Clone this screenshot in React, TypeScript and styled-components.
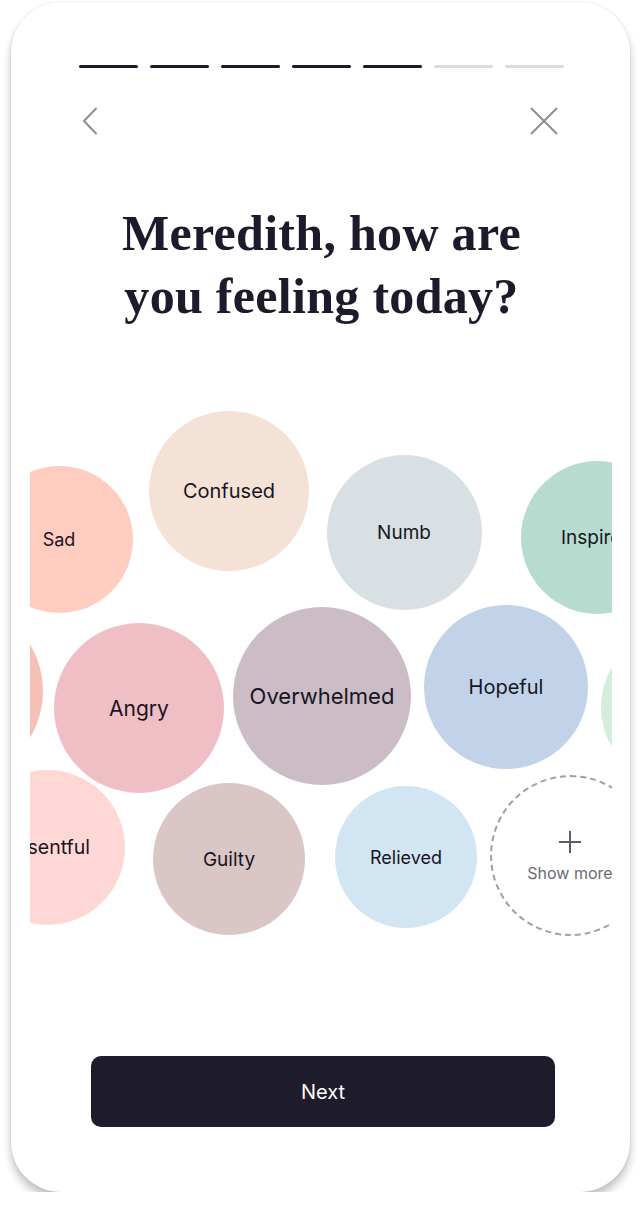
import styled, { createGlobalStyle } from "styled-components";

interface Feeling {
  label: string;
  x: number;
  y: number;
  r: number;
  color: string;
  size: number;
}

// centers are relative to the bubble canvas
const feelings: Feeling[] = [
  { label: "", x: -77, y: 291, r: 90, color: "#f5c1b6", size: 20 },
  { label: "Sad", x: 29, y: 139, r: 73.5, color: "#ffcdbf", size: 18 },
  { label: "Confused", x: 199, y: 91, r: 80, color: "#f3e2d5", size: 20 },
  { label: "Numb", x: 374, y: 132, r: 77.5, color: "#d9e0e4", size: 19 },
  { label: "Inspired", x: 567, y: 137, r: 76.5, color: "#b7dccf", size: 19 },
  { label: "Angry", x: 109, y: 308, r: 85, color: "#f0bfc6", size: 21 },
  { label: "Overwhelmed", x: 292, y: 296, r: 89, color: "#ccbcc6", size: 22 },
  { label: "Hopeful", x: 476, y: 287, r: 82, color: "#c2d2e8", size: 20 },
  { label: "", x: 649, y: 307, r: 78, color: "#d5eedb", size: 19 },
  { label: "Resentful", x: 17, y: 447, r: 77.5, color: "#ffd8d5", size: 19.5 },
  { label: "Guilty", x: 199, y: 459, r: 76, color: "#d9c6c5", size: 19 },
  { label: "Relieved", x: 376, y: 457, r: 71, color: "#d2e5f2", size: 18 },
];

const steps = [true, true, true, true, true, false, false];

export default function App() {
  return (
    <>
      <GlobalStyle />
      <Card>
        <Progress>
          {steps.map((done, idx) => (
            <Step key={idx} $done={done} />
          ))}
        </Progress>

        <NavRow>
          <IconButton aria-label="Back">
            <svg width="16" height="28" viewBox="0 0 16 28">
              <polyline points="14,1.5 2,14 14,26.5" fill="none" stroke="#8e8e93" strokeWidth="2" strokeLinecap="round" strokeLinejoin="round" />
            </svg>
          </IconButton>
          <IconButton aria-label="Close">
            <svg width="28" height="28" viewBox="0 0 28 28">
              <path d="M1.5 1.5 L26.5 26.5 M26.5 1.5 L1.5 26.5" fill="none" stroke="#8e8e93" strokeWidth="2" strokeLinecap="round" />
            </svg>
          </IconButton>
        </NavRow>

        <Heading>
          Meredith, how are
          <br />
          you feeling today?
        </Heading>

        <Canvas>
          {feelings.map((f, idx) => (
            <Bubble
              key={idx}
              $color={f.color}
              $size={f.size}
              style={{ left: f.x - f.r, top: f.y - f.r, width: f.r * 2, height: f.r * 2 }}
            >
              {f.label}
            </Bubble>
          ))}
          <MoreBubble style={{ left: 540 - 80.5, top: 455 - 80.5, width: 161, height: 161 }}>
            <svg width="24" height="24" viewBox="0 0 24 24">
              <path d="M12 1 V23 M1 12 H23" stroke="#5e5b68" strokeWidth="2" />
            </svg>
            <MoreLabel>Show more</MoreLabel>
          </MoreBubble>
        </Canvas>

        <Spacer />
        <NextButton>Next</NextButton>
      </Card>
    </>
  );
}

const GlobalStyle = createGlobalStyle`
  html, body {
    margin: 0;
    padding: 0;
    background: #ffffff;
  }
  body {
    font-family: Inter, "Noto Sans", sans-serif;
    color: #1c1a2b;
  }
`;

const Card = styled.div`
  box-sizing: border-box;
  margin: 2px 10px 0 11px;
  width: 619px;
  height: 1190px;
  background: #ffffff;
  border-radius: 50px;
  box-shadow: 0 7px 9px rgba(0, 0, 0, 0.24), 0 0 2px rgba(0, 0, 0, 0.14);
  display: flex;
  flex-direction: column;
  align-items: center;
  overflow: hidden;
`;

const Progress = styled.div`
  display: flex;
  gap: 12px;
  margin-top: 63px;
  padding-left: 2px;
`;

const Step = styled.div<{ $done: boolean }>`
  width: 59px;
  height: 3px;
  border-radius: 2px;
  background: ${(p) => (p.$done ? "#1c1a2b" : "#dcdcdc")};
`;

const NavRow = styled.div`
  align-self: stretch;
  display: flex;
  justify-content: space-between;
  align-items: center;
  margin-top: 39px;
  padding: 0 72px 0 71px;
`;

const IconButton = styled.button`
  border: none;
  background: none;
  padding: 0;
  display: flex;
  cursor: pointer;
`;

const Heading = styled.h1`
  margin: 67px 0 0;
  padding-left: 2px;
  font-family: "Liberation Serif", "Times New Roman", serif;
  font-weight: 700;
  font-size: 50px;
  line-height: 63px;
  text-align: center;
  color: #1c1a2b;
  letter-spacing: 0.3px;
`;

const Canvas = styled.div`
  position: relative;
  margin-top: 72px;
  margin-left: 1px;
  width: 582px;
  height: 550px;
  flex-shrink: 0;
  overflow: hidden;
`;

const Bubble = styled.div<{ $color: string; $size: number }>`
  position: absolute;
  box-sizing: border-box;
  border-radius: 50%;
  background: ${(p) => p.$color};
  display: flex;
  align-items: center;
  justify-content: center;
  font-size: ${(p) => p.$size}px;
  font-weight: 400;
  color: #17151f;
  white-space: nowrap;
`;

const MoreBubble = styled.div`
  position: absolute;
  box-sizing: border-box;
  border-radius: 50%;
  border: 2px dashed #a0a0a4;
  display: flex;
  flex-direction: column;
  align-items: center;
  justify-content: center;
  gap: 9px;
  padding-top: 2px;
`;

const MoreLabel = styled.span`
  font-size: 16px;
  color: #6b6a72;
  white-space: nowrap;
`;

const Spacer = styled.div`
  flex: 1;
`;

const NextButton = styled.button`
  width: 464px;
  height: 71px;
  margin: 0 0 65px 5px;
  border: none;
  border-radius: 10px;
  background: #1e1b2a;
  color: #ffffff;
  font-family: Inter, "Noto Sans", sans-serif;
  font-size: 20px;
  font-weight: 400;
  cursor: pointer;
`;
